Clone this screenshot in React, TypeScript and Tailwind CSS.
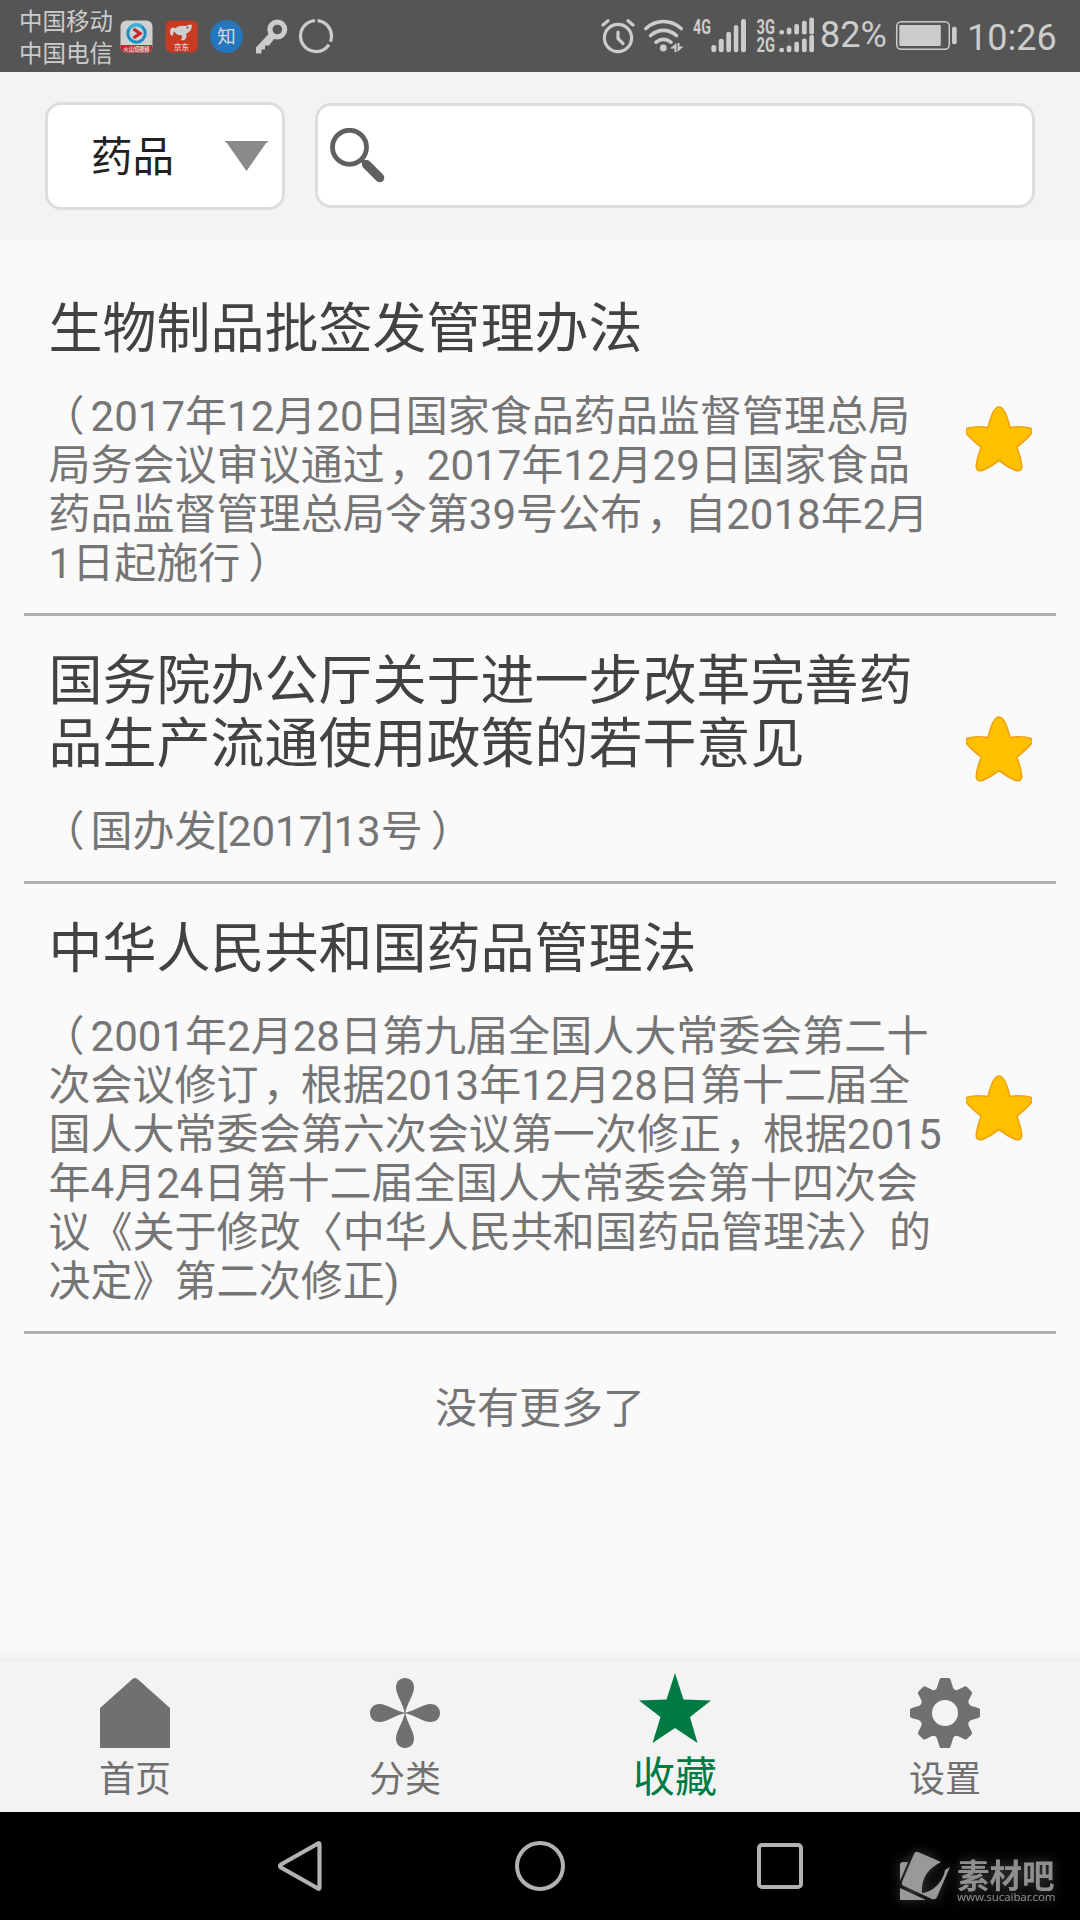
import React from 'react';

interface Article {
  title: string[];
  desc: string[];
}

const articles: Article[] = [
  {
    title: ['生物制品批签发管理办法'],
    desc: [
      '（2017年12月20日国家食品药品监督管理总局',
      '局务会议审议通过，2017年12月29日国家食品',
      '药品监督管理总局令第39号公布，自2018年2月',
      '1日起施行）',
    ],
  },
  {
    title: ['国务院办公厅关于进一步改革完善药', '品生产流通使用政策的若干意见'],
    desc: ['（国办发[2017]13号）'],
  },
  {
    title: ['中华人民共和国药品管理法'],
    desc: [
      '（2001年2月28日第九届全国人大常委会第二十',
      '次会议修订，根据2013年12月28日第十二届全',
      '国人大常委会第六次会议第一次修正，根据2015',
      '年4月24日第十二届全国人大常委会第十四次会',
      '议《关于修改〈中华人民共和国药品管理法〉的',
      '决定》第二次修正)',
    ],
  },
];

// Full-width punctuation sits closer to the middle of its cell
const punctuation: Record<string, string> = {
  '（': 'inline-block w-[42px] -indent-[6px]',
  '）': 'inline-block w-[42px] indent-[8px]',
  '，': 'inline-block w-[42px] indent-[4px]',
};

const DescLine: React.FC<{ text: string }> = ({ text }) => (
  <span className="block h-[49px]">
    {text.split(/([（），])/).map((part, i) =>
      punctuation[part] ? <span key={i} className={punctuation[part]}>{part}</span> : part
    )}
  </span>
);

const StatusBar = () => (
  <div className="h-[72px] bg-[#555555] text-[#cccccc] flex items-start shrink-0">
    <div className="ml-[19px] mt-[6px] w-[95px] text-[23.5px] leading-[32px] whitespace-nowrap">
      <div>中国移动</div>
      <div>中国电信</div>
    </div>

    {/* Notification icons */}
    <svg className="ml-[6px] mt-5 w-[33px] h-[33px]" viewBox="0 0 33 33">
      <defs>
        <clipPath id="app-tile">
          <rect x="0.5" y="0.5" width="32" height="32" rx="6" />
        </clipPath>
      </defs>
      <g clipPath="url(#app-tile)">
        <rect width="33" height="33" fill="#cfcfcf" />
        <rect y="25" width="33" height="8" fill="#c9252d" />
      </g>
      <circle cx="16.5" cy="13.5" r="8.7" fill="none" stroke="#2389c4" strokeWidth="3" />
      <path d="M9 9a8.700 8.700 0 0 1 13-2.300" fill="none" stroke="#35b4d8" strokeWidth="3" />
      <path d="M13.500 9l6.500 4.500-6.500 4.500" fill="none" stroke="#c9252d" strokeWidth="3.200" />
      <text x="3.500" y="31" fontSize="5.200" fontWeight="700" fill="#dddddd">火山短视频</text>
    </svg>
    <svg className="ml-3 mt-5 w-[33px] h-[33px]" viewBox="0 0 33 33">
      <rect x="0.5" y="0.5" width="32" height="32" rx="6" fill="#c93a22" />
      <path d="M5.500 14.500C4.500 11 5.500 7.500 8 7.500C9 7.500 9.500 8 10 8.500C13 6 17 5.500 20 6C22 6 23.500 4.500 25.500 4.500C27 4.500 27.500 6 26.500 7.500C26.500 10 24 12.500 21.500 13.500C21 15.500 22 17 20.500 19C19.500 20.500 17.500 20.500 15.500 20C16.500 19 17.500 17.500 17 15.500C14 15.500 11 14.500 9.500 11.500C8.500 12 8.500 14.500 7.500 15.500C6.500 16 5.800 15.500 5.500 14.500z" fill="#cfcfcf" />
      <circle cx="22.500" cy="7.500" r="0.900" fill="#444444" />
      <text x="9" y="29.500" fontSize="7.500" fontWeight="500" fill="#d8d8d8">京东</text>
    </svg>
    <svg className="ml-3 mt-5 w-[33px] h-[33px]" viewBox="0 0 33 33">
      <circle cx="16.5" cy="16.5" r="16.5" fill="#2477be" />
      <text x="16.5" y="23.200" fontSize="18.500" textAnchor="middle" fill="#dadada">知</text>
    </svg>
    <svg className="ml-3 mt-[19px] w-[33px] h-[35px]" viewBox="0 0 33 35">
      <circle cx="22.300" cy="10.500" r="7.400" fill="none" stroke="currentColor" strokeWidth="5.200" />
      <path d="M15 13.500L1 28.500V34.500h5.500v-4h3.500v-4h4l5.500-7z" fill="currentColor" />
    </svg>
    <svg className="ml-[10px] mt-[18px] w-[36px] h-[36px]" viewBox="0 0 36 36">
      <circle cx="18" cy="18" r="15.5" fill="none" stroke="currentColor" strokeWidth="3.200" strokeDasharray="28.400 3.200 62.500 3.290" transform="rotate(-84 18 18)" />
    </svg>

    {/* Alarm, wifi, signals */}
    <svg className="ml-[267px] mt-[19px] w-[34px] h-[35px]" viewBox="0 0 34 35" fill="none" stroke="currentColor" strokeLinecap="round">
      <circle cx="17" cy="19" r="13.600" strokeWidth="3.200" />
      <path d="M17 13v6.500l5 5" strokeWidth="3.200" strokeLinejoin="round" />
      <path d="M2 6l5-4.200M32 6l-5-4.200" strokeWidth="3.200" />
    </svg>
    <svg className="ml-[8px] mt-[18px] w-[42px] h-[36px]" viewBox="0 0 42 36" fill="none" stroke="currentColor" strokeWidth="3.600" strokeLinecap="round">
      <path d="M2.800 10.500c10.500-9.300 24.900-9.300 35.400 0M7.500 17.500c8-6.800 18-6.800 26 0M13 24.200c4.800-3.600 10.200-3.600 15 0" />
      <circle cx="20.300" cy="30" r="3.400" fill="currentColor" stroke="none" />
      <path d="M33.500 25v9h-2v-3.500h-4.500zM34.500 34v-9h2v3.500h4z" fill="currentColor" stroke="none" />
    </svg>
    <svg className="ml-[8px] mt-[17px] w-[54px] h-[37px] overflow-visible" viewBox="0 0 54 37" fill="currentColor">
      <text x="0" y="17" fontSize="20.500" fontWeight="700" textLength="18" lengthAdjust="spacingAndGlyphs">4G</text>
      <rect x="18.300" y="28" width="5" height="7.300" rx="2.400" />
      <rect x="25.700" y="21.700" width="5" height="13.600" rx="2.400" />
      <rect x="33.300" y="14.700" width="4.700" height="20.600" rx="2.300" />
      <rect x="40.800" y="8" width="4.500" height="27.300" rx="2.200" />
      <rect x="48" y="2" width="5" height="33.300" rx="2.400" />
    </svg>
    <svg className="ml-[9px] mt-[17px] w-[60px] h-[37px] overflow-visible" viewBox="0 0 60 37" fill="currentColor">
      <text x="0.500" y="17" fontSize="20.500" fontWeight="700" textLength="18.500" lengthAdjust="spacingAndGlyphs">3G</text>
      <text x="0.500" y="35.300" fontSize="20.500" fontWeight="700" textLength="18.500" lengthAdjust="spacingAndGlyphs">2G</text>
      <rect x="23.300" y="13" width="4.700" height="4.500" rx="2" />
      <rect x="30.700" y="10.500" width="4.700" height="7" rx="2" />
      <rect x="38.300" y="7" width="4.700" height="10.500" rx="2" />
      <rect x="46" y="3.700" width="4.700" height="13.800" rx="2" />
      <rect x="53.300" y="0.500" width="4.700" height="17" rx="2" />
      <rect x="23.300" y="30.700" width="4.700" height="4.500" rx="2" />
      <rect x="30.700" y="28.500" width="4.700" height="6.700" rx="2" />
      <rect x="38.300" y="24.700" width="4.700" height="10.500" rx="2" />
      <rect x="46" y="21.500" width="4.700" height="13.700" rx="2" />
      <rect x="53.300" y="18" width="4.700" height="17.200" rx="2" />
    </svg>
    <div className="ml-[4px] mt-[14px] w-[68px] text-[36px] leading-[42px] whitespace-nowrap">82%</div>
    <svg className="ml-[7px] mt-5 w-[64px] h-[32px]" viewBox="0 0 64 32">
      <rect x="1.700" y="1.700" width="52.600" height="27.600" rx="4.500" fill="none" stroke="currentColor" strokeWidth="1.500" />
      <rect x="4.300" y="5" width="41.500" height="21" rx="1" fill="currentColor" />
      <rect x="57" y="6.700" width="4.700" height="17.600" rx="2" fill="currentColor" />
    </svg>
    <div className="ml-[8px] mt-[17px] text-[36px] leading-[42px] whitespace-nowrap">10:26</div>
  </div>
);

const SearchHeader = () => (
  <div className="h-[168px] bg-[#f3f3f3] flex items-start pl-[45px] pt-[30px] shrink-0">
    <button className="w-[240px] h-[108px] bg-white border-[3px] border-[#dddddd] rounded-[16px] flex items-center pl-[43px]">
      <span className="mt-[4px] w-[86px] text-[41.500px] leading-[48px] text-[#212121] whitespace-nowrap text-left">药品</span>
      <svg className="ml-[47.500px] w-[43px] h-[30px]" viewBox="0 0 43 30">
        <path d="M0 0h43v1.500h-1.500L21.500 30 1.500 1.500H0z" fill="#8a8a8a" />
      </svg>
    </button>
    <div className="ml-[30px] mt-[1px] w-[720px] h-[105px] bg-white border-[3px] border-[#dddddd] rounded-[16px] flex items-start pl-[12px] pt-[22px]">
      <svg className="w-[56px] h-[56px]" viewBox="0 0 56 56" fill="none" stroke="#606060">
        <circle cx="19.500" cy="19.300" r="17" strokeWidth="4.800" />
        <path d="M31 31l4 4" strokeWidth="4" />
        <path d="M36.500 36.500l13.300 13.300" strokeWidth="9" strokeLinecap="round" />
      </svg>
    </div>
  </div>
);

const FavoriteStar = () => (
  <svg className="w-[66px] h-[66px] shrink-0" viewBox="0 0 66 66">
    <path
      d="M33 1C37 1 41 9 44 21.500C51 20.500 60 20.700 64.500 22.200C67 23.500 66.500 26 65 28C61 33 56.500 36.500 50.800 41.300C53 47 55.500 55 55.800 61C55.500 65 52 65.500 48.500 64C43 61.500 37.500 58 33 54.500C28.500 58 23 61.500 17.500 64C14 65.500 10.500 65 10.200 61C10.500 55 13 47 15.200 41.300C9.500 36.500 5 33 1 28C-0.500 26-1 23.500 1.500 22.200C6 20.700 15 20.500 22 21.500C25 9 29 1 33 1Z"
      fill="#ffc000"
      stroke="#f0a20c"
      strokeWidth="1.600"
      strokeLinejoin="round"
    />
  </svg>
);

const ArticleRow: React.FC<{ article: Article }> = ({ article }) => (
  <div className="mx-6 border-b-[3px] border-[#b0b0b0] flex items-center">
    <div className="w-[917px] pl-[24.5px] pt-[34px] pb-[25px]">
      <h2 className="text-[54px] leading-[63px] text-[#424242] font-normal whitespace-nowrap">
        {article.title.map((line) => (
          <span key={line} className="block">{line}</span>
        ))}
      </h2>
      <p className="mt-[31px] text-[42px] leading-[49px] tracking-[0.030px] text-[#757575] whitespace-nowrap">
        {article.desc.map((line) => (
          <DescLine key={line} text={line} />
        ))}
      </p>
    </div>
    <div className="ml-[25px]">
      <FavoriteStar />
    </div>
  </div>
);

const TabBar = () => (
  <div className="h-[150px] bg-[#f3f3f3] grid grid-cols-4 text-[#707070] text-[36px] leading-[42px] shrink-0">
    <div className="flex flex-col items-center pt-4">
      <svg className="w-[70px] h-[70px]" viewBox="0 0 70 70" fill="currentColor">
        <path d="M0 30L32.500 1Q35-1 37.500 1L70 30v40H0z" />
      </svg>
      <span className="mt-[11px]">首页</span>
    </div>
    <div className="flex flex-col items-center pt-4">
      <svg className="w-[70px] h-[70px]" viewBox="0 0 70 70" fill="currentColor">
        <path d="M35 36C33 25 26 17 26 9.500C26 3.500 30 0 35 0S44 3.500 44 9.500C44 17 37 25 35 36z" />
        <path d="M35 34C33 45 26 53 26 60.500C26 66.500 30 70 35 70S44 66.500 44 60.500C44 53 37 45 35 34z" />
        <path d="M36 35C25 33 17 26 9.500 26C3.500 26 0 30 0 35S3.500 44 9.500 44C17 44 25 37 36 35z" />
        <path d="M34 35C45 33 53 26 60.500 26C66.500 26 70 30 70 35S66.500 44 60.500 44C53 44 45 37 34 35z" />
      </svg>
      <span className="mt-[11px]">分类</span>
    </div>
    <div className="flex flex-col items-center pt-[11px] text-[#007a43]">
      <svg className="w-[72px] h-[70px]" viewBox="0 0 72 70" fill="currentColor">
        <path d="M36 0L44.500 26.500L72 27.500L51 44L58.500 70L36 55L13.500 70L21.500 44L0 27.500L27.500 26.500z" />
      </svg>
      <span className="mt-[10px] text-[42px] leading-[49px]">收藏</span>
    </div>
    <div className="flex flex-col items-center pt-4">
      <svg className="w-[70px] h-[70px]" viewBox="0 0 70 70">
        <path
          d="M31 0h8q1 0 1.500 1.500l2.500 8q.5 2 2.500 2.500t4-1l5-2.500q1.500-.5 2.500.5l4.500 4.500q1 1 .3 2.500l-3 6q-1 2 0 3.500t2.500 2.500l7 2q1.700.5 1.700 2v6q0 1.500-1.700 2l-7 2q-2 .7-2.700 2.500t.2 3.500l3 6q.7 1.500-.3 2.500l-4.500 4.500q-1 1-2.500.3l-6-3q-2-1-3.500-.2t-2 2.400l-2.500 8q-.5 1.500-1.500 1.500h-8q-1 0-1.500-1.500l-2.500-8q-.5-1.600-2-2.400t-3.500.2l-6 3q-1.500.7-2.500-.3l-4.500-4.500q-1-1-.3-2.500l3-6q1-2 .2-3.500t-2.700-2.500l-7-2q-1.700-.5-1.700-2v-6q0-1.500 1.700-2l7-2q2-.8 2.700-2.500t-.2-3.500l-3-6q-.7-1.500.3-2.500l4.500-4.500q1-1 2.500-.5l5 2.500q2 1.500 4 1t2.500-2.500l2.500-8q.5-1.500 1.500-1.500zM35 22a13 13 0 1 0 0 26a13 13 0 1 0 0-26z"
          fill="currentColor"
          fillRule="evenodd"
        />
      </svg>
      <span className="mt-[11px]">设置</span>
    </div>
  </div>
);

const SystemNav = () => (
  <div className="h-[108px] bg-black flex items-start shrink-0">
    <svg className="ml-[277px] mt-[28px] w-[45px] h-[52px]" viewBox="0 0 45 52">
      <path d="M41 3.500Q42.500 2.500 42.500 4.500V47.500Q42.500 49.500 41 48.500L4 27.500Q2 26 4 24.500z" fill="none" stroke="#b2b2b2" strokeWidth="4.200" />
    </svg>
    <div className="ml-[193px] mt-[29px] w-[50px] h-[50px] rounded-full border-4 border-[#b2b2b2]" />
    <div className="ml-[192px] mt-[31px] w-[46px] h-[46px] rounded-[5px] border-4 border-[#b2b2b2]" />
    <div className="ml-[97px] mt-[39px] flex drop-shadow-[0_0_6px_rgba(255,255,255,0.25)]">
      <svg className="w-[50px] h-[50px]" viewBox="0 0 50 50" fill="#999999">
        <path d="M8 11H3Q0 11 0 14V30z" />
        <path d="M0 37V49H26z" />
        <path d="M18 1L41 11C29 17 21 26 22 42C33 41 43 31 45 19L50 16L37 46Q36 49 32 48L4 35Q1 34 2 31L14 3Q15 0 18 1z" />
      </svg>
      <div className="ml-[7px] mt-[11px] text-[#8f8f8f] whitespace-nowrap">
        <div className="text-[32.500px] leading-[30px] font-bold">素材吧</div>
        <div className="text-[11.500px] leading-[10px] tracking-[-0.100px] font-['Noto_Sans']">www.sucaibar.com</div>
      </div>
    </div>
  </div>
);

export default function App() {
  return (
    <div className="w-[1080px] h-[1920px] bg-[#fafafa] flex flex-col overflow-hidden font-['Roboto','Noto_Sans_CJK_SC',sans-serif]">
      <StatusBar />
      <SearchHeader />
      <div className="flex-1 pt-6">
        {articles.map((article) => (
          <ArticleRow key={article.title[0]} article={article} />
        ))}
        <p className="mt-[50px] text-center text-[42px] leading-[49px] text-[#757575]">没有更多了</p>
      </div>
      <div className="h-3 bg-gradient-to-b from-[#fafafa] to-[#ededed] shrink-0" />
      <TabBar />
      <SystemNav />
    </div>
  );
}
